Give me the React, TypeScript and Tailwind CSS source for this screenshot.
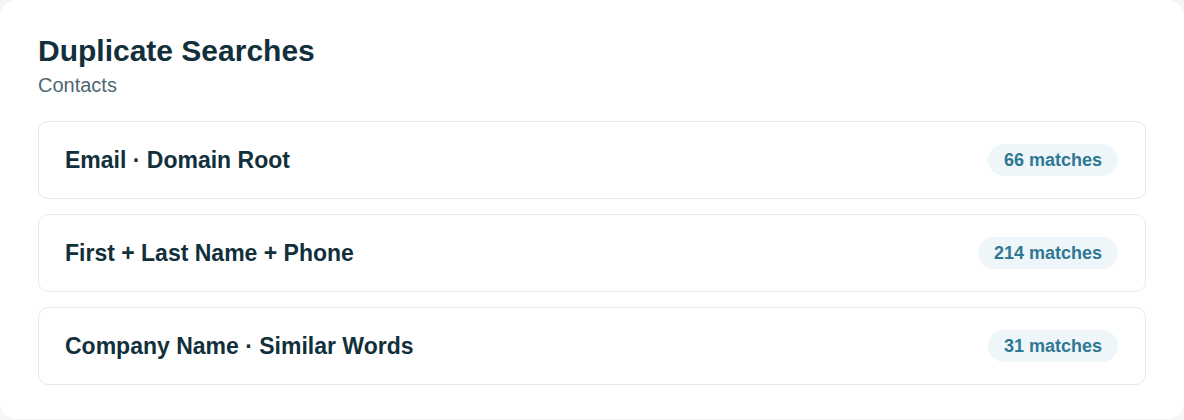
import React from "react";

const rows = [
  { label: "Email · Domain Root", count: "66 matches" },
  { label: "First + Last Name + Phone", count: "214 matches" },
  { label: "Company Name · Similar Words", count: "31 matches" },
];

export default function App() {
  return (
    <div
      className="w-[1184px] h-[420px] bg-[#f3f5f6]"
      style={{ fontFamily: '"Liberation Sans", Arial, sans-serif' }}
    >
      <div className="h-[419px] bg-white rounded-[16px] pt-[33px] px-[38px]">
        <h1 className="text-[30px] leading-[36px] font-bold text-[#12303b]">
          Duplicate Searches
        </h1>
        <p className="mt-[2px] text-[20px] leading-[28px] text-[#4c6873]">
          Contacts
        </p>
        <div className="mt-[22px] flex flex-col gap-[15px]">
          {rows.map((r) => (
            <div
              key={r.label}
              className="h-[78px] flex items-center justify-between border border-[#e6e9eb] rounded-[10px] pl-[26px] pr-[27px]"
            >
              <span className="text-[23px] font-bold text-[#12303b]">
                {r.label}
              </span>
              <span className="h-[32px] flex items-center px-[16px] rounded-full bg-[#eef6f9] text-[18px] font-bold text-[#2e7893]">
                {r.count}
              </span>
            </div>
          ))}
        </div>
      </div>
    </div>
  );
}
